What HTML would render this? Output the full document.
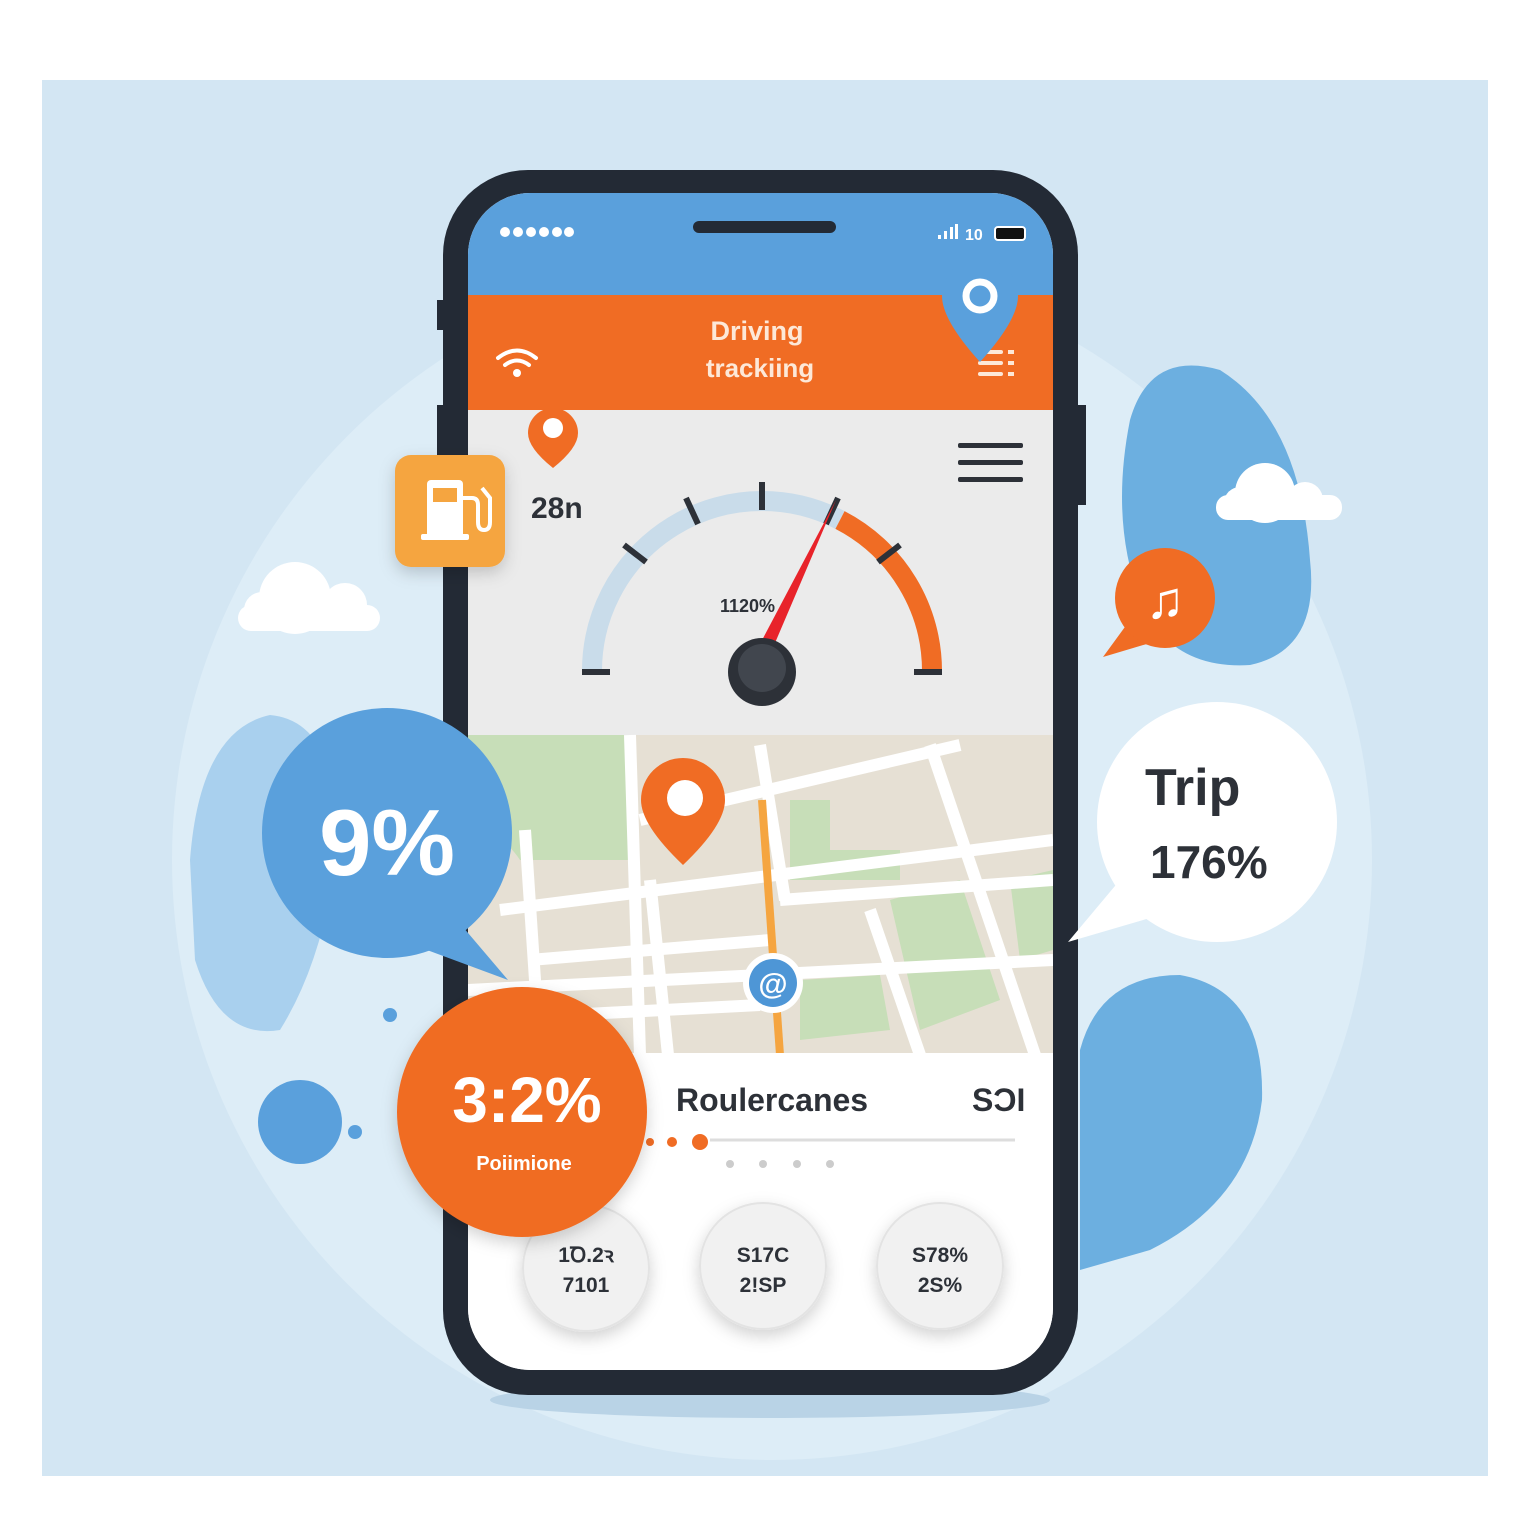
<!DOCTYPE html>
<html><head><meta charset="utf-8"><style>html,body{margin:0;padding:0;background:#fff}svg{display:block}text{font-family:"Liberation Sans",sans-serif;font-weight:bold}</style></head>
<body>
<svg width="1536" height="1536" viewBox="0 0 1536 1536" xmlns="http://www.w3.org/2000/svg">
<defs>
<clipPath id="scr"><rect x="468" y="193" width="585" height="1177" rx="62"/></clipPath>
<filter id="sh" x="-30%" y="-30%" width="160%" height="160%"><feDropShadow dx="0" dy="6" stdDeviation="8" flood-color="#000" flood-opacity="0.18"/></filter>
</defs>
<rect width="1536" height="1536" fill="#fff"/>
<rect x="42" y="80" width="1446" height="1396" fill="#d3e6f3"/>
<circle cx="772" cy="860" r="600" fill="#ddedf7"/>
<!-- blobs -->
<path d="M1130 420 Q1150 350 1220 370 Q1300 420 1310 560 Q1320 650 1250 665 Q1170 670 1140 600 Q1110 520 1130 420Z" fill="#6cafe0"/>
<path d="M1080 1050 Q1100 975 1180 975 Q1265 990 1262 1100 Q1250 1200 1150 1250 L1080 1270Z" fill="#6cafe0"/>
<path d="M190 860 Q200 730 270 715 Q330 720 340 820 Q330 950 280 1030 Q220 1040 195 960Z" fill="#a9d0ee"/>
<ellipse cx="770" cy="1400" rx="280" ry="18" fill="#b9d3e6"/>
<!-- clouds -->
<g fill="#fff"><rect x="1216" y="495" width="126" height="25" rx="12"/><circle cx="1265" cy="493" r="30"/><circle cx="1305" cy="500" r="18"/><circle cx="1240" cy="503" r="16"/></g>
<g fill="#fff"><rect x="238" y="605" width="142" height="26" rx="13"/><circle cx="295" cy="598" r="36"/><circle cx="345" cy="605" r="22"/><circle cx="262" cy="610" r="18"/></g>
<!-- phone -->
<rect x="437" y="300" width="10" height="30" fill="#232a35"/>
<rect x="437" y="405" width="10" height="60" fill="#232a35"/>
<rect x="1074" y="405" width="12" height="100" fill="#232a35"/>
<rect x="443" y="170" width="635" height="1225" rx="85" fill="#232a35"/>
<g clip-path="url(#scr)">
<rect x="468" y="193" width="585" height="1177" fill="#fff"/>
<rect x="468" y="193" width="585" height="103" fill="#5aa0dc"/>
<rect x="468" y="295" width="585" height="116" fill="#f06c24"/>
<rect x="468" y="410" width="585" height="330" fill="#ebebeb"/>
<!-- map -->
<rect x="468" y="735" width="585" height="320" fill="#e6e0d4"/>
<path d="M468 735 H630 V860 H520 Q500 830 468 830Z" fill="#c7deb8"/>
<path d="M790 800 H830 V850 H900 V880 H790Z" fill="#c7deb8"/>
<path d="M890 900 L960 880 L1000 1000 L920 1030Z" fill="#c7deb8"/>
<path d="M800 980 L880 975 L890 1030 L800 1040Z" fill="#c7deb8"/>
<path d="M1010 880 L1053 870 V950 L1020 960Z" fill="#c7deb8"/>
<g stroke="#fff" stroke-width="12" fill="none">
<path d="M630 735 L640 1055"/><path d="M525 830 L540 1055"/><path d="M650 880 L668 1055"/>
<path d="M468 990 L1053 960"/><path d="M500 910 L1053 840"/><path d="M470 1020 L760 1005"/>
<path d="M640 820 L960 745"/><path d="M930 745 L1035 1055"/><path d="M870 910 L920 1055"/>
<path d="M530 960 L770 940"/><path d="M780 900 L1053 880"/><path d="M760 745 L785 900"/>
</g>
<path d="M762 800 L780 1055" stroke="#f5a540" stroke-width="8"/>
<rect x="468" y="1053" width="585" height="320" fill="#fff"/>
</g>
<!-- status bar -->
<g fill="#fff"><circle cx="505" cy="232" r="5"/><circle cx="518" cy="232" r="5"/><circle cx="531" cy="232" r="5"/><circle cx="544" cy="232" r="5"/><circle cx="557" cy="232" r="5"/><circle cx="569" cy="232" r="5"/></g>
<rect x="693" y="221" width="143" height="12" rx="6" fill="#232a35"/>
<g fill="#fff"><rect x="938" y="235" width="3" height="4"/><rect x="944" y="231" width="3" height="8"/><rect x="950" y="227" width="3" height="12"/><rect x="955" y="224" width="3" height="15"/></g>
<text x="965" y="240" font-size="16" fill="#fff">10</text>
<rect x="995" y="227" width="30" height="13" rx="3" fill="#111" stroke="#fff" stroke-width="2"/>
<!-- header -->
<text x="757" y="340" font-size="27" fill="#fde8d8" text-anchor="middle">Driving</text>
<text x="760" y="377" font-size="26" fill="#fde8d8" text-anchor="middle">trackiing</text>
<g fill="none" stroke="#fff" stroke-width="4" stroke-linecap="round"><path d="M498 358 Q517 343 536 358"/><path d="M505 365 Q517 356 529 365"/></g>
<circle cx="517" cy="373" r="4" fill="#fff"/>
<g fill="#fde8d8"><rect x="978" y="350" width="25" height="4" rx="2"/><rect x="978" y="361" width="25" height="4" rx="2"/><rect x="978" y="372" width="25" height="4" rx="2"/><rect x="1008" y="350" width="6" height="4"/><rect x="1008" y="361" width="6" height="4"/><rect x="1008" y="372" width="6" height="4"/></g>
<path d="M980 258 A38 38 0 0 1 1018 296 Q1018 320 980 362 Q942 320 942 296 A38 38 0 0 1 980 258Z" fill="#5aa0dc"/>
<circle cx="980" cy="296" r="14" fill="none" stroke="#fff" stroke-width="7"/>
<!-- hamburger -->
<g fill="#2d3138"><rect x="958" y="443" width="65" height="5" rx="2"/><rect x="958" y="460" width="65" height="5" rx="2"/><rect x="958" y="477" width="65" height="5" rx="2"/></g>
<!-- small pin -->
<path d="M553 408 A25 25 0 0 1 578 433 Q578 448 553 468 Q528 448 528 433 A25 25 0 0 1 553 408Z" fill="#f06c24"/>
<circle cx="553" cy="428" r="10" fill="#fff"/>
<text x="531" y="518" font-size="30" fill="#2d3138" font-weight="normal">28n</text>
<!-- fuel -->
<rect x="395" y="455" width="110" height="112" rx="16" fill="#f5a540" filter="url(#sh)"/>
<g fill="#fff"><rect x="427" y="480" width="36" height="58" rx="4"/><rect x="421" y="534" width="48" height="6" rx="2"/></g>
<rect x="433" y="488" width="24" height="14" fill="#f5a540"/>
<path d="M463 498 H472 Q478 498 478 505 V522 Q478 530 484 530 Q490 530 490 522 V498 L482 488" fill="none" stroke="#fff" stroke-width="4"/>
<!-- gauge -->
<path d="M592 672 A170 170 0 0 1 840 520" fill="none" stroke="#c9dcea" stroke-width="20"/>
<path d="M840 520 A170 170 0 0 1 932 672" fill="none" stroke="#f06c24" stroke-width="20"/>
<g stroke="#2d3138" stroke-width="6"><line x1="582" y1="672" x2="610" y2="672"/><line x1="624" y1="545" x2="646" y2="562"/><line x1="686" y1="498" x2="698" y2="524"/><line x1="762" y1="482" x2="762" y2="510"/><line x1="838" y1="498" x2="826" y2="524"/><line x1="900" y1="545" x2="878" y2="562"/><line x1="914" y1="672" x2="942" y2="672"/></g>
<text x="720" y="612" font-size="18" fill="#2d3138" font-weight="normal">1120%</text>
<path d="M836 500 L772 650 L760 644Z" fill="#e8232a"/>
<circle cx="762" cy="672" r="34" fill="#2d3138"/><circle cx="762" cy="668" r="24" fill="#41464e"/>
<!-- map pins -->
<path d="M683 758 A42 42 0 0 1 725 800 Q725 825 683 865 Q641 825 641 800 A42 42 0 0 1 683 758Z" fill="#f06c24"/>
<circle cx="685" cy="798" r="18" fill="#fff"/>
<circle cx="773" cy="983" r="30" fill="#fff"/><circle cx="773" cy="983" r="24" fill="#4e96d6"/>
<text x="773" y="994" font-size="30" fill="#fff" text-anchor="middle">@</text>
<!-- bottom -->
<text x="676" y="1111" font-size="32" fill="#2d3138" font-weight="normal">Roulercanes</text>
<text x="972" y="1111" font-size="32" fill="#2d3138" font-weight="normal">SƆI</text>
<line x1="710" y1="1140" x2="1015" y2="1140" stroke="#ddd" stroke-width="3"/>
<circle cx="650" cy="1142" r="4" fill="#f06c24"/><circle cx="672" cy="1142" r="5" fill="#f06c24"/><circle cx="700" cy="1142" r="8" fill="#f06c24"/>
<g fill="#ccc"><circle cx="730" cy="1164" r="4"/><circle cx="763" cy="1164" r="4"/><circle cx="797" cy="1164" r="4"/><circle cx="830" cy="1164" r="4"/></g>
<g fill="#f1f1f1" stroke="#e3e3e3" stroke-width="2" filter="url(#sh)"><circle cx="586" cy="1268" r="63"/><circle cx="763" cy="1266" r="63"/><circle cx="940" cy="1266" r="63"/></g>
<g font-size="21" fill="#2d3138" text-anchor="middle"><text x="586" y="1262">1Ꝺ.2ꝛ</text><text x="586" y="1292">7101</text><text x="763" y="1262">S17C</text><text x="763" y="1292">2!SP</text><text x="940" y="1262">S78%</text><text x="940" y="1292">2S%</text></g>
<!-- bubbles -->
<circle cx="300" cy="1122" r="42" fill="#5aa0dc"/><circle cx="355" cy="1132" r="7" fill="#5aa0dc"/><circle cx="390" cy="1015" r="7" fill="#5aa0dc"/>
<path d="M440 900 L508 980 L400 940Z" fill="#5aa0dc"/>
<circle cx="387" cy="833" r="125" fill="#5aa0dc"/>
<text x="387" y="875" font-size="94" fill="#fff" text-anchor="middle">9%</text>
<circle cx="522" cy="1112" r="125" fill="#f06c24" filter="url(#sh)"/>
<text x="527" y="1122" font-size="64" fill="#fff" text-anchor="middle">3:2%</text>
<text x="524" y="1170" font-size="20" fill="#fff" text-anchor="middle">Poiimione</text>
<path d="M1120 880 L1068 942 L1160 915Z" fill="#fff"/>
<circle cx="1217" cy="822" r="120" fill="#fff"/>
<text x="1145" y="805" font-size="52" fill="#2d3138">Trip</text>
<text x="1150" y="878" font-size="46" fill="#2d3138">176%</text>
<path d="M1130 620 L1103 657 L1160 640Z" fill="#f06c24"/>
<circle cx="1165" cy="598" r="50" fill="#f06c24"/>
<text x="1165" y="618" font-size="52" fill="#fff" text-anchor="middle" font-weight="normal">♫</text>
</svg>
</body></html>
